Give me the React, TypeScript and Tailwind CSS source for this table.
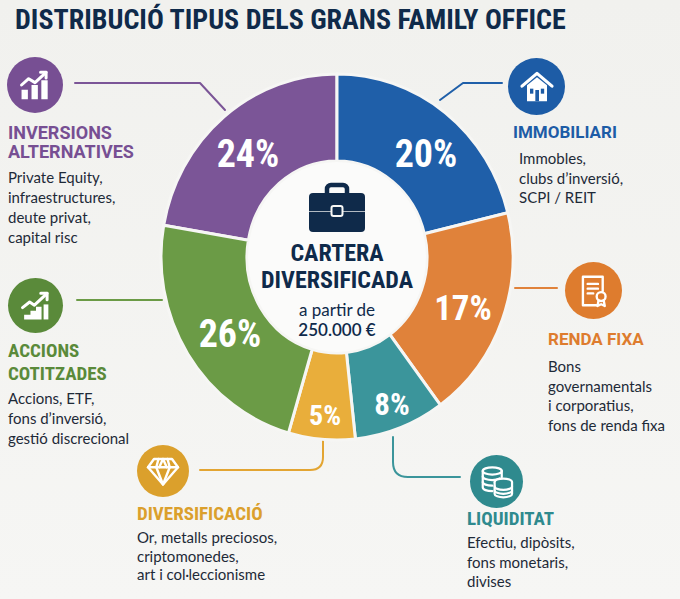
import type { ReactNode } from 'react'

const CX = 337
const CY = 257
const RX = 176
const RY = 183
const IRX = 90
const IRY = 96

const condensed = { fontFamily: '"Roboto Condensed", "Liberation Sans Narrow", "DejaVu Sans Condensed", Roboto, sans-serif', fontStretch: 'condensed' as const }

type Segment = { from: number; to: number; color: string }

const segments: Segment[] = [
  { from: 280, to: 360, color: '#7b5597' },
  { from: 0, to: 76, color: '#1f5fa9' },
  { from: 76, to: 144, color: '#e0823a' },
  { from: 144, to: 174, color: '#3b959b' },
  { from: 174, to: 196, color: '#e9ae3b' },
  { from: 196, to: 280, color: '#6b9b46' },
]

const pt = (deg: number, rx: number, ry: number) => {
  const r = (deg * Math.PI) / 180
  return `${(CX + rx * Math.sin(r)).toFixed(2)} ${(CY - ry * Math.cos(r)).toFixed(2)}`
}

const ringPath = ({ from, to }: Segment) => {
  const large = to - from > 180 ? 1 : 0
  return [
    `M ${pt(from, RX, RY)}`,
    `A ${RX} ${RY} 0 ${large} 1 ${pt(to, RX, RY)}`,
    `L ${pt(to, IRX, IRY)}`,
    `A ${IRX} ${IRY} 0 ${large} 0 ${pt(from, IRX, IRY)}`,
    'Z',
  ].join(' ')
}

const labels = [
  { text: '24%', x: 248, y: 167, size: 38 },
  { text: '20%', x: 426, y: 167, size: 38 },
  { text: '17%', x: 463, y: 320, size: 35 },
  { text: '26%', x: 230, y: 347, size: 38 },
  { text: '5%', x: 325, y: 425, size: 28 },
  { text: '8%', x: 392, y: 415, size: 31 },
]

function ChartIcon() {
  return (
    <svg viewBox="0 0 24 24" className="size-[38px]" fill="none" stroke="white" strokeWidth={1.9} strokeLinecap="round" strokeLinejoin="round">
      <rect x="3.5" y="15" width="4" height="6" fill="white" stroke="none" />
      <rect x="9.8" y="12" width="4" height="9" fill="white" stroke="none" />
      <rect x="16" y="9" width="4" height="12" fill="white" stroke="none" />
      <path d="M3.5 12 L8 8 L12 10.5 L19 4" />
      <path d="M15.5 4 H19 V7.5" />
    </svg>
  )
}

function GrowthIcon() {
  return (
    <svg viewBox="0 0 24 24" className="size-[38px]" fill="none" stroke="white" strokeWidth={1.9} strokeLinecap="round" strokeLinejoin="round">
      <path d="M4.5 20.5 V17.5 H8.5 V15 H12 V12.5 H15.5 V20.5 Z" fill="white" stroke="none" />
      <rect x="16.8" y="11" width="3" height="9.5" fill="white" stroke="none" />
      <path d="M3.5 13 L8 9.5 L11 11.5 L19 4" />
      <path d="M15 4 H19 V8" />
    </svg>
  )
}

function HouseIcon() {
  return (
    <svg viewBox="0 0 24 24" className="size-[40px]" fill="none">
      <path d="M3 11.5 L12 3.8 L21 11.5" stroke="white" strokeWidth={1.9} strokeLinecap="round" strokeLinejoin="round" />
      <path d="M6 11 L12 6.2 L18 11 V20.5 H6 Z" fill="white" />
      <rect x="7.8" y="13" width="2" height="3" fill="#1d5ca6" />
      <rect x="11" y="13.8" width="2.2" height="6.7" fill="#1d5ca6" />
      <rect x="14.3" y="13" width="2" height="3" fill="#1d5ca6" />
    </svg>
  )
}

function CertificateIcon() {
  return (
    <svg viewBox="0 0 24 24" className="size-[38px]" fill="none" stroke="white" strokeWidth={1.5} strokeLinecap="round" strokeLinejoin="round">
      <path d="M13.5 21 H5 V3 H17.5 V12" />
      <path d="M8 7.5 H14.5 M8 10.5 H14.5 M8 13.5 H11.5" />
      <circle cx="16.5" cy="15.5" r="2.8" />
      <path d="M14.9 17.8 L14.2 21.5 L16.5 20.4 L18.8 21.5 L18.1 17.8" />
    </svg>
  )
}

function GemIcon() {
  return (
    <svg viewBox="0 0 24 24" className="size-[36px]" fill="none" stroke="white" strokeWidth={1.6} strokeLinecap="round" strokeLinejoin="round">
      <path d="M6 4 H18 L22 9.5 L12 21 L2 9.5 Z" />
      <path d="M2 9.5 H22" />
      <path d="M9 4 L7.5 9.5 L12 21 L16.5 9.5 L15 4" />
      <path d="M12 4 L9.5 9.5 M12 4 L14.5 9.5" />
    </svg>
  )
}

function CoinsIcon() {
  return (
    <svg viewBox="0 0 24 24" className="size-[38px]" fill="none" stroke="white" strokeWidth={1.4} strokeLinecap="round" strokeLinejoin="round">
      <ellipse cx="9" cy="5" rx="6" ry="2.3" />
      <path d="M3 5 V15.5 C3 16.8 5.7 17.8 9 17.8" />
      <path d="M3 8.5 C3 9.8 5.7 10.8 9 10.8 C11 10.8 12.6 10.4 13.7 9.8" />
      <path d="M3 12 C3 13.3 5.7 14.3 9 14.3" />
      <path d="M15 5 V9" />
      <ellipse cx="16" cy="12" rx="5.5" ry="2.2" fill="#2f8a8e" />
      <path d="M10.5 12 V19.5 C10.5 20.7 13 21.7 16 21.7 C19 21.7 21.5 20.7 21.5 19.5 V12" fill="#2f8a8e" />
      <path d="M10.5 14.8 C10.5 16 13 17 16 17 C19 17 21.5 16 21.5 14.8" />
      <path d="M10.5 17.3 C10.5 18.5 13 19.5 16 19.5 C19 19.5 21.5 18.5 21.5 17.3" />
    </svg>
  )
}

function Briefcase() {
  return (
    <svg viewBox="0 0 56 50" className="h-[50px] w-[56px]">
      <path d="M18 13 V7 a4 4 0 0 1 4 -4 h12 a4 4 0 0 1 4 4 V13" fill="none" stroke="#0f2a4a" strokeWidth={4.5} />
      <rect x="0" y="11" width="56" height="39" rx="4" fill="#0f2a4a" />
      <path d="M0 29.5 H56" stroke="#f7f7f5" strokeWidth={1} opacity={0.7} />
      <rect x="22.5" y="24" width="11" height="10" rx="2" fill="#0f2a4a" stroke="#f7f7f5" strokeWidth={2} />
    </svg>
  )
}

type CalloutProps = {
  className: string
  iconClass: string
  icon: ReactNode
  color: string
  title: string[]
  titleClass: string
  titleCondensed?: boolean
  body: string[]
  bodyClass: string
}

function Callout({ className, iconClass, icon, color, title, titleClass, titleCondensed, body, bodyClass }: CalloutProps) {
  return (
    <div className={`absolute flex flex-col ${className}`}>
      <div className={`flex items-center justify-center rounded-full ${iconClass}`} style={{ backgroundColor: color }}>
        {icon}
      </div>
      <div
        className={`font-bold uppercase whitespace-nowrap ${titleClass}`}
        style={{ color, ...(titleCondensed ? condensed : { fontFamily: 'Roboto, "Noto Sans", sans-serif' }) }}
      >
        {title.map((line) => (
          <div key={line}>{line}</div>
        ))}
      </div>
      <div className={`whitespace-nowrap text-[#1e2a38] font-['Lato','Noto_Sans',sans-serif] text-[15px] ${bodyClass}`}>
        {body.map((line) => (
          <div key={line}>{line}</div>
        ))}
      </div>
    </div>
  )
}

export default function App() {
  return (
    <div className="relative h-[599px] w-[680px] overflow-hidden bg-gradient-to-b from-[#f1f1ee] to-[#f6f6f4]">
      <h1 className="px-[15px] pt-[3px] text-[28px] leading-[34px] font-bold text-[#0f2a4a]" style={condensed}>
        DISTRIBUCIÓ TIPUS DELS GRANS FAMILY OFFICE
      </h1>

      <svg className="absolute inset-0" width={680} height={599} viewBox="0 0 680 599">
        <g fill="none" strokeWidth={2} strokeLinecap="round" strokeLinejoin="round">
          <path d="M75 83 H200 L225 110" stroke="#7b5597" />
          <path d="M440 100 L463 83 H502" stroke="#1f5fa9" />
          <path d="M77 300 H162" stroke="#6b9b46" />
          <path d="M515 288 H557" stroke="#e0823a" />
          <path d="M393 437 V462 Q393 477 408 477 H460" stroke="#3b959b" />
          <path d="M200 470 H310 Q323 470 323 457 V440" stroke="#e3a532" />
        </g>
        {segments.map((s) => (
          <path key={s.color} d={ringPath(s)} fill={s.color} stroke="#f6f6f4" strokeWidth={3} strokeLinejoin="round" />
        ))}
        <ellipse cx={CX} cy={CY} rx={IRX - 1} ry={IRY - 1} fill="#fbfbfa" />
        {labels.map((l) => (
          <text
            key={l.text}
            x={l.x}
            y={l.y}
            textAnchor="middle"
            fill="white"
            fontWeight={700}
            fontSize={l.size}
            style={condensed}
          >
            {l.text}
          </text>
        ))}
      </svg>

      <div className="absolute left-[247px] top-[182px] flex w-[180px] flex-col items-center text-[#0f2a4a]">
        <Briefcase />
        <div className="mt-[8px] text-center text-[24px] leading-[27px] font-bold" style={condensed}>
          <div>CARTERA</div>
          <div>DIVERSIFICADA</div>
        </div>
        <div className="mt-[6px] text-center font-['Lato','Noto_Sans',sans-serif] text-[17px] leading-[20px]">
          <div>a partir de</div>
          <div className="font-semibold">250.000 €</div>
        </div>
      </div>

      <Callout
        className="left-[7px] top-[57px]"
        iconClass="size-[56px]"
        icon={<ChartIcon />}
        color="#774f93"
        title={['Inversions', 'Alternatives']}
        titleClass="mt-[10px] text-[18px] leading-[19px] ml-[1px]"
        body={['Private Equity,', 'infraestructures,', 'deute privat,', 'capital risc']}
        bodyClass="mt-[6px] leading-[20px] ml-[1px]"
      />

      <Callout
        className="left-[8px] top-[278px]"
        iconClass="size-[55px]"
        icon={<GrowthIcon />}
        color="#5a8a3a"
        title={['Accions', 'Cotitzades']}
        titleCondensed
        titleClass="mt-[6px] text-[19px] leading-[23px]"
        body={['Accions, ETF,', 'fons d\u2019inversió,', 'gestió discrecional']}
        bodyClass="mt-[3px] leading-[20px]"
      />

      <Callout
        className="left-[508px] top-[58px]"
        iconClass="size-[57px]"
        icon={<HouseIcon />}
        color="#1d5ca6"
        title={['Immobiliari']}
        titleClass="mt-[8px] ml-[5px] text-[17px] leading-[19px]"
        body={['Immobles,', 'clubs d\u2019inversió,', 'SCPI / REIT']}
        bodyClass="mt-[7px] ml-[11px] leading-[19.5px]"
      />

      <Callout
        className="left-[548px] top-[262px]"
        iconClass="size-[57px] ml-[17px]"
        icon={<CertificateIcon />}
        color="#de7c2e"
        title={['Renda Fixa']}
        titleClass="mt-[11px] text-[17px] leading-[19px]"
        body={['Bons', 'governamentals', 'i corporatius,', 'fons de renda fixa']}
        bodyClass="mt-[8px] leading-[19.5px]"
      />

      <Callout
        className="left-[137px] top-[445px]"
        iconClass="size-[52px]"
        icon={<GemIcon />}
        color="#dba02c"
        title={['Diversificació']}
        titleCondensed
        titleClass="mt-[7px] text-[19px] leading-[20px]"
        body={['Or, metalls preciosos,', 'criptomonedes,', 'art i col·leccionisme']}
        bodyClass="mt-[4px] leading-[18.5px]"
      />

      <Callout
        className="left-[467px] top-[455px]"
        iconClass="size-[53px] ml-[3px]"
        icon={<CoinsIcon />}
        color="#2f8a8e"
        title={['Liquiditat']}
        titleCondensed
        titleClass="mt-[1px] text-[19px] leading-[20px]"
        body={['Efectiu, dipòsits,', 'fons monetaris,', 'divises']}
        bodyClass="mt-[4px] leading-[19.5px]"
      />
    </div>
  )
}
